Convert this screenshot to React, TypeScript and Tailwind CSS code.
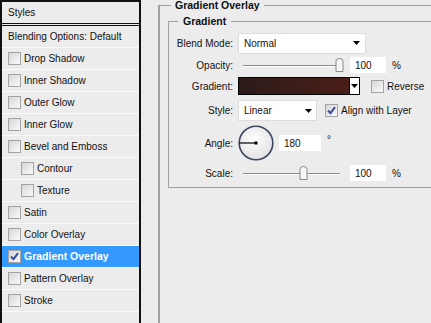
import { FC } from "react";

interface CheckProps {
  checked?: boolean;
}

const Check: FC<CheckProps> = ({ checked }) => (
  <span className="flex h-[13px] w-[13px] shrink-0 items-center justify-center border border-[#a3a3a3] bg-linear-to-br from-[#d6d6d6] to-[#fbfbfb]">
    {checked && (
      <svg width="9" height="9" viewBox="0 0 9 9">
        <path d="M1 4.5 L3.5 7.2 L8 1.2" stroke="#3b4c9e" strokeWidth="2" fill="none" />
      </svg>
    )}
  </span>
);

const Arrow = () => (
  <svg width="7" height="4" viewBox="0 0 7 4">
    <polygon points="0,0 7,0 3.5,4" fill="#000" />
  </svg>
);

// slider track with thumb, drawn as one svg
const Slider: FC<{ thumb: number }> = ({ thumb }) => (
  <svg width="107" height="16" viewBox="0 0 107 16">
    <line x1="5" y1="8.5" x2="102" y2="8.5" stroke="#8c8c8c" strokeWidth="1" />
    <line x1="5" y1="9.5" x2="102" y2="9.5" stroke="#ffffff" strokeWidth="1" />
    <path
      d={`M${thumb} 4 Q${thumb} 1.5 ${thumb + 3.5} 1.5 Q${thumb + 7} 1.5 ${thumb + 7} 4 L${thumb + 7} 14.5 L${thumb} 14.5 Z`}
      fill="#f7f7f7"
      stroke="#8a8a8a"
      strokeWidth="1"
    />
  </svg>
);

const styleRows: { label: string; indent?: boolean; active?: boolean }[] = [
  { label: "Drop Shadow" },
  { label: "Inner Shadow" },
  { label: "Outer Glow" },
  { label: "Inner Glow" },
  { label: "Bevel and Emboss" },
  { label: "Contour", indent: true },
  { label: "Texture", indent: true },
  { label: "Satin" },
  { label: "Color Overlay" },
  { label: "Gradient Overlay", active: true },
  { label: "Pattern Overlay" },
  { label: "Stroke" },
];

const App: FC = () => {
  return (
    <div className="flex h-[323px] w-[431px] overflow-hidden bg-[#ececec] font-['Liberation_Sans',Arial,sans-serif] text-[10px] text-[#111]">
      {/* styles list */}
      <div className="flex h-[323px] w-[141px] shrink-0 flex-col border-x-2 border-t-2 border-[#111]">
        <div className="flex h-[21px] items-center pl-[6px]">Styles</div>
        <div className="h-[3px] border-y border-[#111]" />
        <div className="flex h-[22px] items-center border-b border-[#fafafa] pl-[6px]">
          Blending Options: Default
        </div>
        {styleRows.map((row) => (
          <div
            key={row.label}
            className={
              row.active
                ? "flex h-[22px] items-center gap-[3px] border-b border-[#fafafa] bg-[#3399ff] pl-[6px] text-[10.5px] font-bold text-white"
                : row.indent
                ? "flex h-[22px] items-center gap-[3px] border-b border-[#fafafa] pl-[19px]"
                : "flex h-[22px] items-center gap-[3px] border-b border-[#fafafa] pl-[6px]"
            }
          >
            <Check checked={row.active} />
            <span>{row.label}</span>
          </div>
        ))}
      </div>

      {/* gradient overlay panel */}
      <fieldset className="ml-[17px] h-[360px] w-[400px] min-w-[400px] shrink-0 border-l-2 border-t border-[#a0a0a0]">
        <legend className="ml-[11px] px-[4px] text-[10.5px] leading-[11px] font-bold">Gradient Overlay</legend>
        <fieldset className="ml-[8px] mt-[5px] w-[400px] min-w-[400px] border-y border-l border-[#a0a0a0] pb-[6px]">
          <legend className="ml-[9px] px-[5px] text-[10.5px] leading-[11px] font-bold">Gradient</legend>

          {/* blend mode */}
          <div className="mt-[5px] flex h-[22px] items-center gap-[5px]">
            <span className="w-[64px] text-right">Blend Mode:</span>
            <div className="flex h-[21px] w-[128px] items-center justify-between border border-[#dcdcdc] bg-white pl-[5px] pr-[5px]">
              <span>Normal</span>
              <Arrow />
            </div>
          </div>

          {/* opacity */}
          <div className="mt-[3px] flex h-[16px] items-center gap-[5px]">
            <span className="w-[64px] text-right">Opacity:</span>
            <Slider thumb={98} />
            <div className="flex h-[16px] w-[36px] items-center bg-white pl-[5px]">100</div>
            <span className="ml-[1px]">%</span>
          </div>

          {/* gradient */}
          <div className="mt-[4px] flex h-[18px] items-center gap-[5px]">
            <span className="w-[64px] text-right">Gradient:</span>
            <div className="flex h-[18px] w-[122px] border border-black">
              <div className="flex-1 bg-linear-to-r from-[#2c1b19] to-[#4b1d18]" />
              <div className="flex w-[10px] items-center justify-center border-l border-black bg-white">
                <Arrow />
              </div>
            </div>
            <div className="ml-[6px] flex items-center gap-[3px]">
              <Check />
              <span>Reverse</span>
            </div>
          </div>

          {/* style */}
          <div className="mt-[5px] flex h-[21px] items-center gap-[5px]">
            <span className="w-[64px] text-right">Style:</span>
            <div className="flex h-[21px] w-[79px] items-center justify-between border border-[#dcdcdc] bg-white pl-[5px] pr-[4px]">
              <span>Linear</span>
              <Arrow />
            </div>
            <div className="ml-[3px] flex items-center gap-[3px]">
              <Check checked />
              <span>Align with Layer</span>
            </div>
          </div>

          {/* angle */}
          <div className="mt-[4px] flex h-[36px] items-center gap-[5px]">
            <span className="w-[64px] text-right">Angle:</span>
            <svg width="36" height="36" viewBox="0 0 36 36">
              <defs>
                <radialGradient id="dial" cx="0.45" cy="0.4" r="0.6">
                  <stop offset="0" stopColor="#ffffff" />
                  <stop offset="1" stopColor="#e2e2e4" />
                </radialGradient>
              </defs>
              <circle cx="18" cy="18" r="16.8" fill="url(#dial)" stroke="#3d4660" strokeWidth="1.6" />
              <line x1="1.5" y1="18" x2="18" y2="18" stroke="#000" strokeWidth="1.2" />
              <rect x="16.5" y="16.5" width="3" height="3" fill="#000" />
            </svg>
            <div className="flex h-[16px] w-[42px] items-center bg-white pl-[5px]">180</div>
            <span className="mb-[8px] ml-[1px]">°</span>
          </div>

          {/* scale */}
          <div className="mt-[4px] flex h-[16px] items-center gap-[5px]">
            <span className="w-[64px] text-right">Scale:</span>
            <Slider thumb={62} />
            <div className="flex h-[16px] w-[36px] items-center bg-white pl-[5px]">100</div>
            <span className="ml-[1px]">%</span>
          </div>
        </fieldset>
      </fieldset>
    </div>
  );
};

export default App;
